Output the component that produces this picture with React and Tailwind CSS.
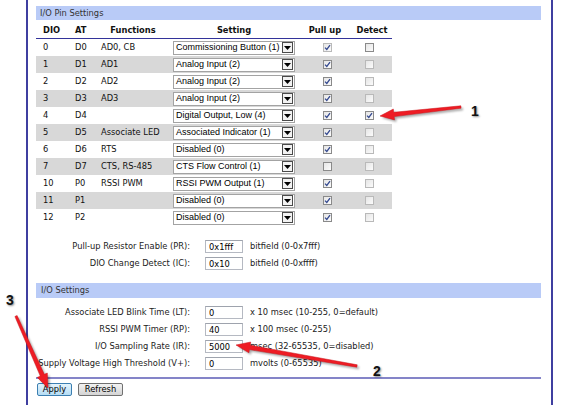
import React from "react";

const pins = [
  ["0", "D0", "AD0, CB", "Commissioning Button (1)", true, false],
  ["1", "D1", "AD1", "Analog Input (2)", true, false],
  ["2", "D2", "AD2", "Analog Input (2)", true, false],
  ["3", "D3", "AD3", "Analog Input (2)", true, false],
  ["4", "D4", "", "Digital Output, Low (4)", true, true],
  ["5", "D5", "Associate LED", "Associated Indicator (1)", true, false],
  ["6", "D6", "RTS", "Disabled (0)", true, false],
  ["7", "D7", "CTS, RS-485", "CTS Flow Control (1)", false, false],
  ["10", "P0", "RSSI PWM", "RSSI PWM Output (1)", true, false],
  ["11", "P1", "", "Disabled (0)", true, false],
  ["12", "P2", "", "Disabled (0)", true, false],
];

const ioSettings = [
  ["Associate LED Blink Time (LT):", "0", "x 10 msec (10-255, 0=default)"],
  ["RSSI PWM Timer (RP):", "40", "x 100 msec (0-255)"],
  ["I/O Sampling Rate (IR):", "5000", "msec (32-65535, 0=disabled)"],
  ["Supply Voltage High Threshold (V+):", "0", "mvolts (0-65535)"],
];

const Checkbox = ({ checked, faded }) => (
  <span
    className={
      "flex h-[9px] w-[9px] items-center justify-center border bg-gradient-to-br from-[#e6e6e6] to-[#fbfbfb] " +
      (faded ? "border-[#b9b9b9]" : "border-[#8a8a8a]")
    }
  >
    {checked ? (
      <svg width="7" height="7" viewBox="0 0 7 7">
        <path d="M1 3.6 L2.8 5.4 L6 1.2" fill="none" stroke="#34498f" strokeWidth="1.3" />
      </svg>
    ) : null}
  </span>
);

const Select = ({ value }) => (
  <div className="flex h-[14px] w-[122px] items-center border border-[#a3a3a3] bg-white">
    <span className="flex-1 pl-[2px] font-['Liberation_Sans',Arial,sans-serif] text-[9px] leading-none text-black whitespace-nowrap">
      {value}
    </span>
    <span className="mr-[1px] flex h-[11px] w-[11px] items-center justify-center border border-[#4a4a4a] bg-[#f2f2f2]">
      <svg width="7" height="4" viewBox="0 0 7 4">
        <path d="M0 0 H7 L3.5 4 Z" fill="#000" />
      </svg>
    </span>
  </div>
);

const Field = ({ label, value, unit }) => (
  <div className="flex h-[17px] items-center">
    <div className="flex w-[154px] justify-end whitespace-nowrap text-[#222]">{label}</div>
    <input
      readOnly
      value={value}
      className="ml-[15px] h-[13px] w-[38px] border border-[#b5b9c2] border-t-[#9ea3ad] bg-white pl-[3px] text-[8.3px] text-black outline-none"
    />
    <span className="ml-[7px] whitespace-nowrap text-[#222]">{unit}</span>
  </div>
);

// arrow outline, tail (x1,y1) to tip (x2,y2)
const arrowPoints = (x1, y1, x2, y2) => {
  const len = Math.hypot(x2 - x1, y2 - y1);
  const dx = (x2 - x1) / len;
  const dy = (y2 - y1) / len;
  const nx = -dy;
  const ny = dx;
  const hl = 14;
  const bx = x2 - dx * hl;
  const by = y2 - dy * hl;
  const pts = [
    [x1 + nx * 1.2, y1 + ny * 1.2],
    [bx + nx * 2.2, by + ny * 2.2],
    [bx + nx * 5.5, by + ny * 5.5],
    [x2, y2],
    [bx - nx * 5.5, by - ny * 5.5],
    [bx - nx * 2.2, by - ny * 2.2],
    [x1 - nx * 1.2, y1 - ny * 1.2],
  ];
  return pts.map((p) => p[0].toFixed(1) + "," + p[1].toFixed(1)).join(" ");
};

const arrows = [
  [461, 107, 380, 116],
  [357, 366, 236, 345],
  [16, 316, 48, 388],
];

const App = () => {
  return (
    <div className="relative h-[405px] w-[575px] overflow-hidden bg-white font-['DejaVu_Sans',sans-serif] text-[8.3px] leading-none text-[#111]">
      <div className="ml-[26px] h-full w-[527px] border-x-2 border-[#3f3fa0] pl-[8px] pr-[10px] pt-[6px]">
        {/* I/O pin table */}
        <div className="flex h-[14px] items-center bg-[#b9cbf7] pl-[4px] text-[#333]">I/O Pin Settings</div>

        <div className="w-[356px]">
          <div className="flex h-[19px] items-center border-b border-[#33339a] pt-[2px] font-bold text-[#111]">
            <div className="w-[32px] pl-[7px]">DIO</div>
            <div className="w-[28px] pl-[7px]">AT</div>
            <div className="w-[74px] text-center">Functions</div>
            <div className="w-[128px] text-center">Setting</div>
            <div className="w-[54px] text-center">Pull up</div>
            <div className="w-[40px] text-center">Detect</div>
          </div>

          {pins.map((pin, i) => (
            <div
              key={pin[0]}
              className={"flex h-[17px] items-center " + (i % 2 === 1 ? "bg-[#d8d8d8]" : "bg-white")}
            >
              <div className="w-[32px] pl-[7px]">{pin[0]}</div>
              <div className="w-[28px] pl-[7px]">{pin[1]}</div>
              <div className="w-[74px] pl-[5px] whitespace-nowrap">{pin[2]}</div>
              <div className="w-[128px] pl-[3px]">
                <Select value={pin[3]} />
              </div>
              <div className="w-[54px] pl-[25px]">
                <Checkbox checked={pin[4]} faded={i === 0} />
              </div>
              <div className="w-[40px] pl-[13px]">
                <Checkbox checked={pin[5]} faded={i !== 0 && !pin[5]} />
              </div>
            </div>
          ))}
        </div>

        <div className="mt-[12px]">
          <Field label="Pull-up Resistor Enable (PR):" value="0x1fff" unit="bitfield (0-0x7fff)" />
          <Field label="DIO Change Detect (IC):" value="0x10" unit="bitfield (0-0xffff)" />
        </div>

        {/* I/O settings */}
        <div className="mt-[11px] flex h-[15px] items-center bg-[#b9cbf7] pl-[5px] text-[#333]">I/O Settings</div>

        <div className="mt-[6px]">
          {ioSettings.map((s) => (
            <Field key={s[0]} label={s[0]} value={s[1]} unit={s[2]} />
          ))}
        </div>

        <div className="mt-[5px] h-[2px] bg-[#8484c8]"></div>

        <div className="mt-[4px] flex gap-[6px] pl-[1px]">
          <button className="h-[13px] w-[35px] rounded-[2px] border border-[#3c7fb1] bg-gradient-to-b from-[#e5f4fc] to-[#b4dcf4] text-[8.3px] leading-none text-black">
            Apply
          </button>
          <button className="h-[13px] w-[45px] rounded-[2px] border border-[#707070] bg-gradient-to-b from-[#f2f2f2] to-[#d4d4d4] text-[8.3px] leading-none text-black">
            Refresh
          </button>
        </div>
      </div>

      {/* annotations */}
      <svg className="pointer-events-none absolute left-0 top-0" width="575" height="405">
        <defs>
          <filter id="soft" x="-20%" y="-20%" width="140%" height="140%">
            <feGaussianBlur stdDeviation="1.2" />
          </filter>
        </defs>
        {arrows.map((a, i) => (
          <g key={i}>
            <polygon
              points={arrowPoints(a[0] + 2, a[1] + 2, a[2] + 2, a[3] + 2)}
              fill="#000"
              opacity="0.35"
              filter="url(#soft)"
            />
            <polygon points={arrowPoints(a[0], a[1], a[2], a[3])} fill="#ee1c24" stroke="#c8141a" strokeWidth="0.5" />
          </g>
        ))}
      </svg>
      <span className="absolute left-[471px] top-[104px] font-['Liberation_Sans',Arial,sans-serif] text-[14px] font-bold leading-none text-[#111] [text-shadow:1px_1px_2px_rgba(0,0,0,0.45)]">
        1
      </span>
      <span className="absolute left-[373px] top-[364px] font-['Liberation_Sans',Arial,sans-serif] text-[14px] font-bold leading-none text-[#111] [text-shadow:1px_1px_2px_rgba(0,0,0,0.45)]">
        2
      </span>
      <span className="absolute left-[6px] top-[293px] font-['Liberation_Sans',Arial,sans-serif] text-[14px] font-bold leading-none text-[#111] [text-shadow:1px_1px_2px_rgba(0,0,0,0.45)]">
        3
      </span>
    </div>
  );
};

export default App;
